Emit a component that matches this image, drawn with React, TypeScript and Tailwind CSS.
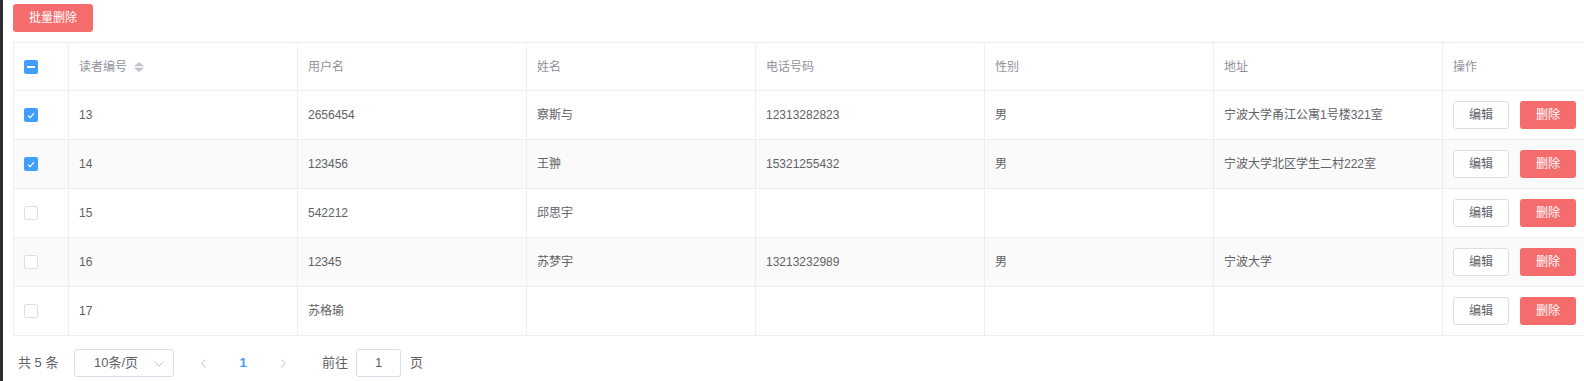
import React from 'react';

interface Reader {
  id: number;
  username: string;
  name: string;
  phone: string;
  gender: string;
  address: string;
  checked: boolean;
}

const readers: Reader[] = [
  { id: 13, username: '2656454', name: '察斯与', phone: '12313282823', gender: '男', address: '宁波大学甬江公寓1号楼321室', checked: true },
  { id: 14, username: '123456', name: '王翀', phone: '15321255432', gender: '男', address: '宁波大学北区学生二村222室', checked: true },
  { id: 15, username: '542212', name: '邱思宇', phone: '', gender: '', address: '', checked: false },
  { id: 16, username: '12345', name: '苏梦宇', phone: '13213232989', gender: '男', address: '宁波大学', checked: false },
  { id: 17, username: '苏格瑜', name: '', phone: '', gender: '', address: '', checked: false },
];

const gridCols = 'grid grid-cols-[55px_229px_229px_229px_229px_229px_229px_229px]';
const cell = 'flex items-center pl-[10px] border-r border-[#ebeef5]';

function Checkbox({ state }: { state: 'on' | 'off' | 'half' }) {
  if (state === 'off') {
    return <span className="block w-[14px] h-[14px] rounded-[2px] border border-[#dcdfe6] bg-white" />;
  }
  return (
    <span className="flex items-center justify-center w-[14px] h-[14px] rounded-[2px] bg-[#409eff]">
      {state === 'half' ? (
        <span className="block w-[8px] h-[2px] bg-white" />
      ) : (
        <svg width="8" height="7" viewBox="0 0 8 7" fill="none">
          <path d="M1 3.6 L3.1 5.6 L7 1.2" stroke="white" strokeWidth="1.2" />
        </svg>
      )}
    </span>
  );
}

function SortCaret() {
  return (
    <svg width="10" height="10" viewBox="0 0 10 10" className="ml-[7px]">
      <path d="M0 4.2 L5 0 L10 4.2 Z" fill="#c0c4cc" />
      <path d="M0 5.8 L5 10 L10 5.8 Z" fill="#c0c4cc" />
    </svg>
  );
}

export default function App() {
  const headers = ['用户名', '姓名', '电话号码', '性别', '地址', '操作'];

  return (
    <div className="flex h-[381px] w-[1584px] overflow-hidden bg-white font-['Liberation_Sans','Noto_Sans_CJK_SC',sans-serif]">
      <div className="w-[3px] shrink-0 bg-[#2b2d31]" />
      <div className="flex flex-col pl-[10px] shrink-0">
        <button className="mt-[4px] w-[80px] h-[28px] rounded-[3px] bg-[#f56c6c] text-white text-[12px]">
          批量删除
        </button>

        {/* table */}
        <div className="mt-[10px] w-[1660px] border-t border-l border-[#ebeef5] text-[12px]">
          <div className={`${gridCols} h-[48px] border-b border-[#ebeef5] text-[#909399]`}>
            <div className={cell}>
              <Checkbox state="half" />
            </div>
            <div className={cell}>
              读者编号
              <SortCaret />
            </div>
            {headers.map(h => (
              <div key={h} className={cell}>{h}</div>
            ))}
          </div>

          {readers.map((r, i) => (
            <div
              key={r.id}
              className={`${gridCols} h-[49px] border-b border-[#ebeef5] text-[#606266] ${i % 2 === 1 ? 'bg-[#fafafa]' : 'bg-white'}`}
            >
              <div className={cell}>
                <Checkbox state={r.checked ? 'on' : 'off'} />
              </div>
              <div className={cell}>{r.id}</div>
              <div className={cell}>{r.username}</div>
              <div className={cell}>{r.name}</div>
              <div className={cell}>{r.phone}</div>
              <div className={cell}>{r.gender}</div>
              <div className={cell}>{r.address}</div>
              <div className={`${cell} gap-[11px]`}>
                <button className="w-[56px] h-[28px] rounded-[3px] border border-[#dcdfe6] bg-white text-[#606266] text-[12px]">
                  编辑
                </button>
                <button className="w-[56px] h-[28px] rounded-[3px] bg-[#f56c6c] text-white text-[12px]">
                  删除
                </button>
              </div>
            </div>
          ))}
        </div>

        {/* pagination */}
        <div className="mt-[13px] flex items-center pl-[5px] text-[13px] text-[#606266]">
          <span className="w-[56px]">共 5 条</span>
          <div className="relative flex items-center w-[100px] h-[28px] rounded-[3px] border border-[#dcdfe6] pl-[19px]">
            10条/页
            <svg width="10" height="6" viewBox="0 0 10 6" className="absolute right-[9px] top-[11px]" fill="none">
              <path d="M0.5 0.5 L5 5 L9.5 0.5" stroke="#c0c4cc" strokeWidth="1" />
            </svg>
          </div>
          <div className="ml-[14px] w-[30px] flex justify-center">
            <svg width="5" height="9" viewBox="0 0 5 9" fill="none">
              <path d="M4.5 0.5 L0.7 4.5 L4.5 8.5" stroke="#c0c4cc" strokeWidth="1" />
            </svg>
          </div>
          <div className="ml-[7px] w-[36px] text-center font-bold text-[#409eff]">1</div>
          <div className="ml-[7px] w-[30px] flex justify-center">
            <svg width="5" height="9" viewBox="0 0 5 9" fill="none">
              <path d="M0.5 0.5 L4.3 4.5 L0.5 8.5" stroke="#c0c4cc" strokeWidth="1" />
            </svg>
          </div>
          <span className="ml-[24px]">前往</span>
          <div className="ml-[8px] w-[45px] h-[28px] rounded-[3px] border border-[#dcdfe6] flex items-center justify-center">
            1
          </div>
          <span className="ml-[9px]">页</span>
        </div>
      </div>
    </div>
  );
}
